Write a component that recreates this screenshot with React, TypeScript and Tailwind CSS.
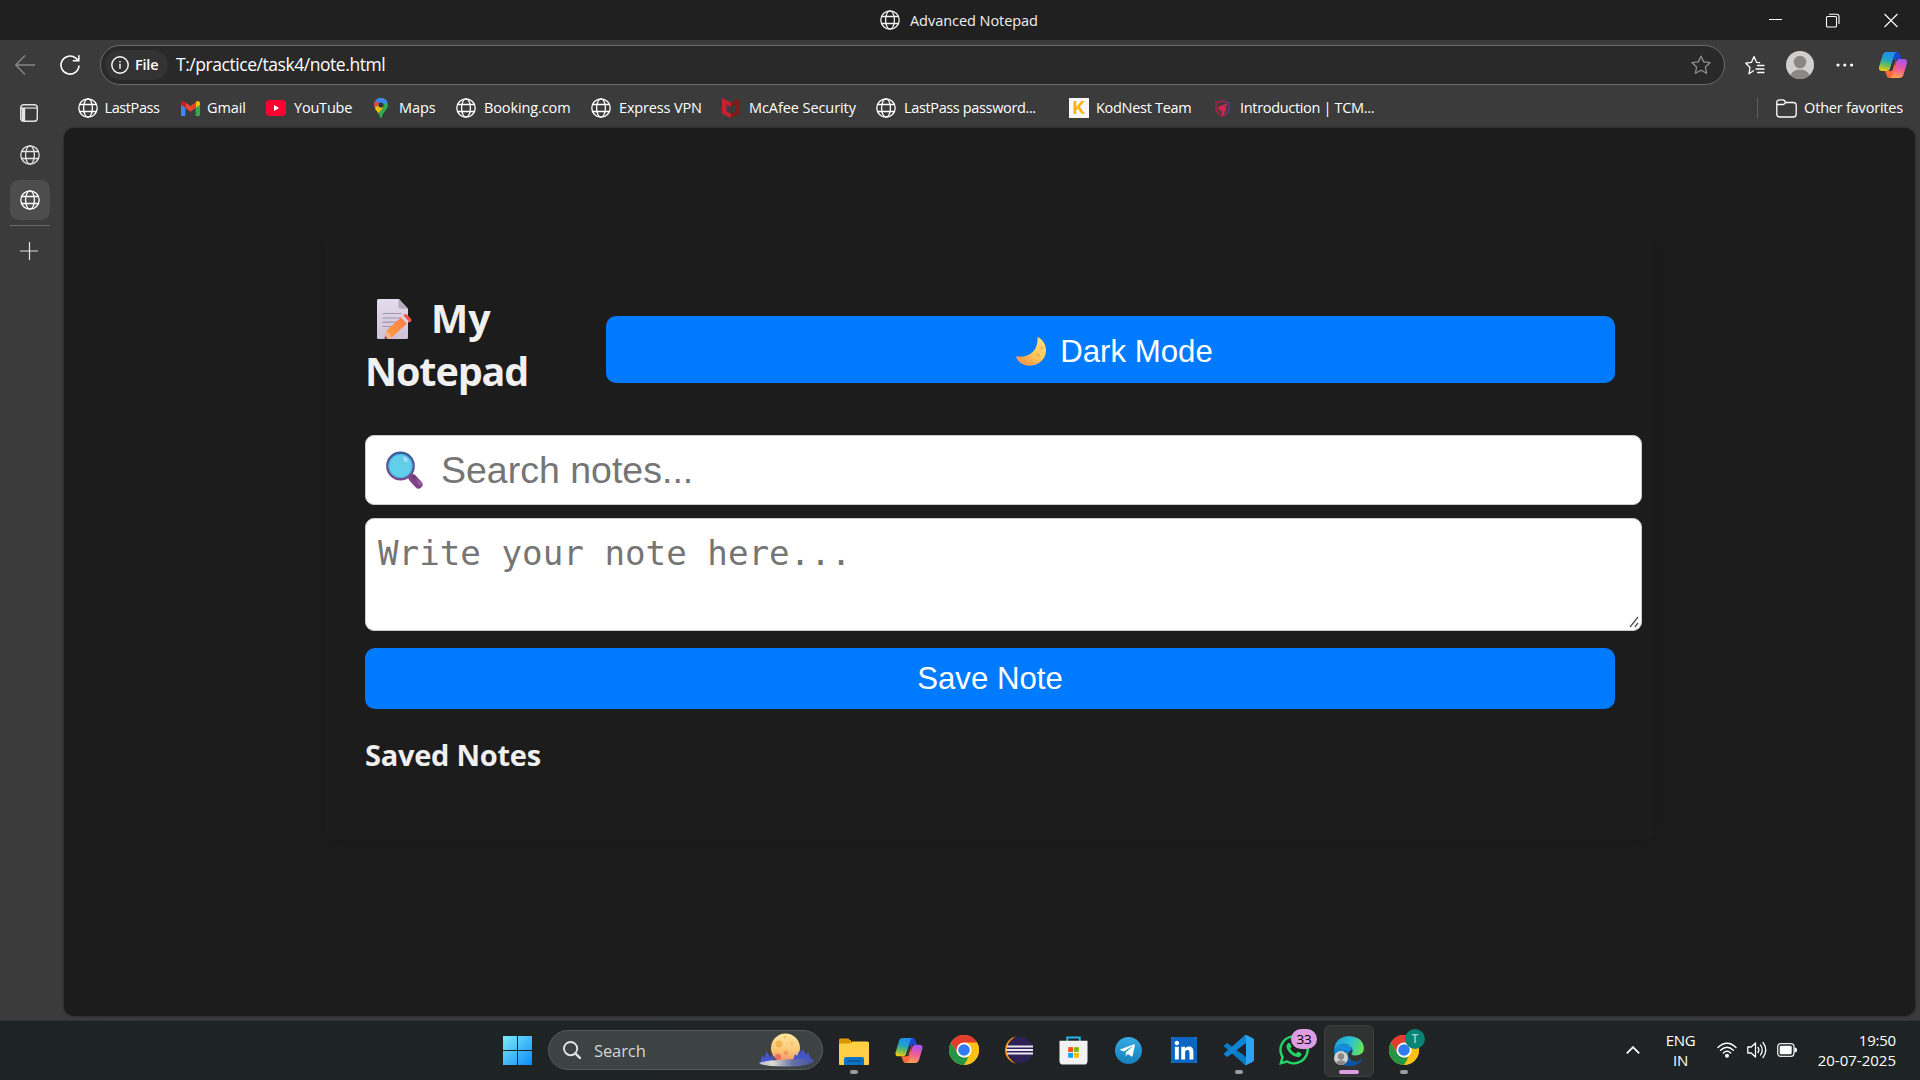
import type { ReactNode } from 'react';
import { FaWhatsapp, FaLinkedin, FaTelegramPlane } from 'react-icons/fa';

type P = { className?: string };

const Globe = ({ className = '' }: P) => (
  <svg className={`size-5 shrink-0 ${className}`} viewBox="0 0 20 20" fill="none" stroke="currentColor" strokeWidth="1.3">
    <circle cx="10" cy="10" r="9.2" />
    <ellipse cx="10" cy="10" rx="4.4" ry="9.2" />
    <path d="M1.6 6.5h16.8M1.6 13.5h16.8" />
  </svg>
);

const Gmail = () => (
  <svg className="w-[19px] h-[15px]" viewBox="0 0 19 15">
    <path d="M0 2v11.5C0 14.3.6 15 1.4 15h3V6z" fill="#4285f4" />
    <path d="M19 2v11.5c0 .8-.6 1.5-1.4 1.5h-3V6z" fill="#34a853" />
    <path d="M14.6 1.3V7L19 3.7V2.2C19 .2 16.8-.6 15.3.6z" fill="#fbbc04" />
    <path d="M4.4 7V1.3L9.5 5l5.1-3.7V7L9.5 10.8z" fill="#ea4335" />
    <path d="M0 2.2v1.5L4.4 7V1.3L3.7.7C2.2-.5 0 .2 0 2.2z" fill="#c5221f" />
  </svg>
);

const YouTube = () => (
  <svg className="w-5 h-4" viewBox="0 0 20 16">
    <rect width="20" height="16" rx="3.4" fill="#ff0033" />
    <path d="M8 5v6l5.2-3z" fill="#fff" />
  </svg>
);

const MapPin = () => (
  <svg className="w-[14px] h-5" viewBox="0 0 14 20">
    <clipPath id="pin"><path d="M7 0a7 7 0 0 0-7 7c0 4.200 4.400 6.400 5.900 11.700.4 1.600 1.800 1.600 2.200 0C9.600 13.400 14 11.200 14 7a7 7 0 0 0-7-7z" /></clipPath>
    <g clipPath="url(#pin)">
      <rect width="14" height="20" fill="#34a853" />
      <path d="M0 0h14v4L7 7 0 14z" fill="#4285f4" />
      <path d="M0 2l5 3.500L0 11z" fill="#ea4335" />
      <path d="M0 11.500L5 6l4 3.500L3 17z" fill="#fbbc04" />
      <path d="M4 0h10v4L9.500 6.500 5 4.500 2 1.500z" fill="#4285f4" />
    </g>
    <circle cx="7" cy="7" r="2.600" fill="#333" />
  </svg>
);

const McAfee = () => (
  <svg className="w-[18px] h-5" viewBox="0 0 18 20">
    <path d="M0 0l9 4.500v4.300L4.500 6.500v7.200L9 15.600V20L0 15.800z" fill="#c8202f" />
    <path d="M18 0L9 4.500v4.300l4.500-2.300v7.200L9 15.600V20l9-4.200z" fill="#7a1d1b" />
  </svg>
);

const KodNest = () => (
  <span className="flex size-5 items-center justify-center bg-[#f8f8f8] font-['Inter',sans-serif] text-[18px] leading-none font-bold text-[#fbb40c]">K</span>
);

const Shield = () => (
  <svg className="w-[15px] h-[17px]" viewBox="0 0 15 17" fill="none">
    <defs><linearGradient id="sh" x1="0" x2="1"><stop offset="0" stopColor="#c9183f" /><stop offset=".5" stopColor="#c21f55" /><stop offset="1" stopColor="#5b3aa0" /></linearGradient></defs>
    <path d="M1 2.500Q5 2.200 7.500.8 10 2.200 14 2.500v6q0 5-6.500 7.800Q1 13.500 1 8.500z" stroke="url(#sh)" strokeWidth="1.200" />
    <path d="M13 3L5 6 1.500 8.500 5 9l-2 3 3.500-2 .5 6 2-1 1-4 2-2-1.500-2z" fill="#d0264f" />
  </svg>
);

const Copilot = ({ className = '', id }: P & { id: string }) => (
  <svg className={className} viewBox="0 0 28 26">
    <defs>
      <linearGradient id={`${id}a`} x1=".5" y1="0" x2=".3" y2="1"><stop offset="0" stopColor="#1c8ff0" /><stop offset=".4" stopColor="#22a2c4" /><stop offset=".7" stopColor="#6dbd5a" /><stop offset="1" stopColor="#f4cb10" /></linearGradient>
      <linearGradient id={`${id}b`} x1=".6" y1="0" x2=".4" y2="1"><stop offset="0" stopColor="#a452f0" /><stop offset=".5" stopColor="#ee5a9c" /><stop offset="1" stopColor="#ffa14e" /></linearGradient>
    </defs>
    <path d="M13 0h5q2 0 2.700 2.300L22.500 7H18q-2 0-3 3l-3 9z" fill="#1747d1" />
    <path d="M15 26h-4.500q-2 0-2.800-2.300L6 19h4q2 0 3-3l4-10z" fill="#ff6a3c" />
    <path d="M7.500 0H18q-2 .3-3 3.500L11 17q-.8 2-3 2H3q-4 0-2.800-4.500L3.600 3Q4.600 0 7.500 0z" fill={`url(#${id}a)`} />
    <path d="M20.500 26H11q2-.3 3-3.500L17.500 9q.8-2 3-2H25q4 0 2.800 4.500L24.400 23q-1 3-3.900 3z" fill={`url(#${id}b)`} />
    <path d="M13.800 8.500l3.200-1.300-3.600 11.300-3 .8z" fill="#33343a" />
  </svg>
);

const Star = ({ lines = false, className = '' }: P & { lines?: boolean }) => (
  <svg className={`size-5 ${className}`} viewBox="0 0 20 20" fill="none" stroke="currentColor" strokeWidth="1.300" strokeLinejoin="round" strokeLinecap="round">
    {lines ? (
      <path d="M8.500 15.800L4 18.800l1-6.300L.8 8.200l5.700-.9L9 1.500l2.600 5.800 3 .4M12.500 10.500H19M11 14h8M12.500 17.500H19" />
    ) : (
      <path d="M10 1.200l2.700 5.700 6.300.8-4.600 4.300 1.200 6.300L10 15.200l-5.600 3.100L5.600 12 1 7.700l6.300-.8z" />
    )}
  </svg>
);

const Avatar = ({ className = '' }: P) => (
  <svg className={className} viewBox="0 0 28 28">
    <clipPath id="av"><circle cx="14" cy="14" r="14" /></clipPath>
    <g clipPath="url(#av)">
      <rect width="28" height="28" fill="#d2d0ce" />
      <circle cx="14" cy="11" r="6.300" fill="#8a8785" />
      <ellipse cx="14" cy="26" rx="10" ry="7.500" fill="#8a8785" />
    </g>
  </svg>
);

const bookmarks: { w: string; iw: string; icon: ReactNode; label: string; track: string }[] = [
  { w: 'w-[103px]', iw: 'w-[26.500px]', icon: <Globe />, label: 'LastPass', track: 'tracking-[-0.4px]' },
  { w: 'w-[85px]', iw: 'w-[26px]', icon: <Gmail />, label: 'Gmail', track: 'tracking-[-0.1px]' },
  { w: 'w-[108px]', iw: 'w-[28px]', icon: <YouTube />, label: 'YouTube', track: 'tracking-[-0.2px]' },
  { w: 'w-[82px]', iw: 'w-[25px]', icon: <MapPin />, label: 'Maps', track: 'tracking-[-0.1px]' },
  { w: 'w-[135px]', iw: 'w-[28px]', icon: <Globe />, label: 'Booking.com', track: 'tracking-[-0.12px]' },
  { w: 'w-[131px]', iw: 'w-[28px]', icon: <Globe />, label: 'Express VPN', track: 'tracking-[-0.16px]' },
  { w: 'w-[154px]', iw: 'w-[27px]', icon: <McAfee />, label: 'McAfee Security', track: 'tracking-[-0.08px]' },
  { w: 'w-[193px]', iw: 'w-[28px]', icon: <Globe />, label: 'LastPass password...', track: 'tracking-[-0.36px]' },
  { w: 'w-[146px]', iw: 'w-[27px]', icon: <KodNest />, label: 'KodNest Team', track: 'tracking-[-0.3px]' },
  { w: 'w-[170px]', iw: 'w-[25px]', icon: <Shield />, label: 'Introduction | TCM...', track: 'tracking-[-0.32px]' },
];

const TitleBar = () => (
  <header className="flex h-10 shrink-0 items-center bg-[#202020] pl-[880px] text-[#f0f0f0]">
    <Globe />
    <span className="mt-px ml-[10px] w-[858px] text-[14.5px] tracking-[-0.05px]">Advanced Notepad</span>
    <svg className="h-[15px] w-[130px]" viewBox="0 0 130 15" fill="none" stroke="#fff" strokeWidth="1.100">
      <path d="M1 6.500h13M116.500 1l13 13M129.500 1l-13 13" />
      <rect x="58.500" y="3.500" width="10" height="10.500" rx="1" />
      <path d="M61 1.200h7.500q2.500 0 2.500 2.500V11" />
    </svg>
  </header>
);

const Toolbar = () => (
  <div className="flex h-[50px] shrink-0 items-center pl-[15px] text-white">
    <svg className="h-[22px] w-5 text-[#858585]" viewBox="0 0 20 22" fill="none" stroke="currentColor" strokeWidth="1.400"><path d="M20 11H1M10 1.500L.8 11l9.200 9.500" /></svg>
    <svg className="ml-[25px] size-5" viewBox="0 0 20 20" fill="none" stroke="currentColor" strokeWidth="1.600"><path d="M19 10.500a9 9 0 1 1-3.200-7.300L18.300 5.500M18.800.3v5.500h-6" /></svg>
    <div className="ml-5 flex h-10 w-[1625px] items-center rounded-full border border-[#6b6b6b] bg-[#292929] pl-1">
      <div className="flex h-[30px] w-[63px] items-center rounded-full bg-[#333] pl-[6px]">
        <svg className="size-[18px]" viewBox="0 0 18 18" fill="none" stroke="currentColor" strokeWidth="1.400"><circle cx="9" cy="9" r="8.200" /><path d="M9 7.800v5M9 5v1.500" /></svg>
        <span className="ml-[6px] text-[14.5px] font-semibold tracking-[-0.2px]">File</span>
      </div>
      <span className="mb-px ml-2 text-[17.5px] tracking-[-0.45px]">T:/practice/task4/note.html</span>
      <Star className="mr-[13px] ml-auto text-[#8f8f8f]" />
    </div>
    <Star lines className="ml-5" />
    <Avatar className="ml-[21px] size-7" />
    <svg className="ml-[22px] h-4 w-[18px]" viewBox="0 0 18 4" fill="currentColor"><circle cx="2" cy="2" r="1.600" /><circle cx="8.800" cy="2" r="1.600" /><circle cx="15.600" cy="2" r="1.600" /></svg>
    <Copilot id="ct" className="ml-[25px] h-[26px] w-[28px]" />
  </div>
);

const BookmarkBar = () => (
  <div className="flex h-[38px] shrink-0 items-center pb-[2px] pl-[78px] text-[14.5px] whitespace-nowrap text-white">
    {bookmarks.map((b) => (
      <div key={b.label} className={`flex shrink-0 items-center ${b.w}`}>
        <span className={`shrink-0 ${b.iw}`}>{b.icon}</span>
        <span className={`mb-px ${b.track}`}>{b.label}</span>
      </div>
    ))}
    <div className="ml-auto flex h-5 items-center border-l border-[#5c5c5c] pr-[17px] pl-[18px]">
      <svg className="mr-[7px] h-[19px] w-[21px]" viewBox="0 0 21 19" fill="none" stroke="currentColor" strokeWidth="1.300"><path d="M.8 5.500V15q0 3 3 3h13.400q3 0 3-3V6.500q0-3-3-3H10L8.300 1.500Q7.700.8 6.700.8H3.800q-3 0-3 3v1.700h6q1 0 1.600-.7L10 3.500" /></svg>
      <span className="mb-px tracking-[-0.2px]">Other favorites</span>
    </div>
  </div>
);

const SideTabs = () => (
  <aside className="flex w-16 shrink-0 flex-col pl-[10px] text-[#e4e4e4]">
    <div className="mt-[-24px] flex h-[18px] pl-[10px]">
      <svg className="size-[18px]" viewBox="0 0 18 18" fill="none" stroke="currentColor"><rect x=".7" y=".7" width="16.600" height="16.600" rx="3" strokeWidth="1.400" /><path d="M1 4h16" strokeWidth="1.200" /><path d="M3.400 4v13" strokeWidth="3.600" /></svg>
    </div>
    <div className="mt-[23px] flex w-10 justify-center"><Globe /></div>
    <div className="mt-[15px] flex size-10 items-center justify-center rounded-[9px] bg-[#4d4d4d] text-white"><Globe /></div>
    <div className="mt-[5px] h-px w-10 bg-[#6a6a6a]" />
    <svg className="mt-4 ml-[10px] size-[18px]" viewBox="0 0 18 18" stroke="currentColor" strokeWidth="1.200"><path d="M9.500 0v18M0 9h18" /></svg>
  </aside>
);

const MemoIcon = () => (
  <svg className="h-10 w-[36px]" viewBox="0 0 36 40">
    <defs>
      <linearGradient id="pg" x1="0" y1="0" x2="0" y2="1"><stop offset="0" stopColor="#e4dcec" /><stop offset="1" stopColor="#cfc2d8" /></linearGradient>
      <linearGradient id="pn" x1="1" y1="0" x2="0" y2="1"><stop offset="0" stopColor="#ff7a45" /><stop offset="1" stopColor="#ffa445" /></linearGradient>
    </defs>
    <path d="M1.500 0H22l9 9.800V38.500Q31 40 29.500 40h-28Q0 40 0 38.500v-37Q0 0 1.500 0z" fill="url(#pg)" />
    <path d="M21.500 0v8q0 1.800 1.800 1.800H31z" fill="#b6aac3" />
    <path d="M5.500 14.500h19M5.500 19h19M5.500 23.200h15M5.500 27.500h11" stroke="#a197ad" strokeWidth="1.200" />
    <path d="M9.500 31.500L24 18.200l6 6.300L15 38.600 7.500 40z" fill="url(#pn)" />
    <path d="M9.500 31.500l5.500 7L7.500 40z" fill="#f2b48c" />
    <path d="M7.500 40l.7-3 2.300 2.400z" fill="#7b3350" />
    <path d="M24 18.200l2.200-2 6 6.300-2.200 2z" fill="#d9d3ea" />
    <path d="M26.200 16.200l1-.7q1.500-1.200 3 .3l3.700 3.900q1.400 1.500 0 2.900l-1 .8z" fill="#f8554d" />
  </svg>
);

const CrescentIcon = () => (
  <svg className="h-[29px] w-[30px]" viewBox="0 0 30 29">
    <defs><linearGradient id="cr" x1=".9" y1="0" x2=".2" y2="1"><stop offset="0" stopColor="#ffe27a" /><stop offset=".55" stopColor="#fcc75c" /><stop offset="1" stopColor="#f98f45" /></linearGradient></defs>
    <path d="M22.500.3C31 6 32.500 16.500 26 23.500 18 31.500 4.500 30 .2 20.500q-.3-1.300 1-1.200C13 21.500 22 14 21.600 1q.1-1.200.9-.7z" fill="url(#cr)" />
    <g fill="#eeb04d"><circle cx="22" cy="18" r="1.800" /><circle cx="14" cy="24" r="1.500" /><circle cx="26" cy="11" r="1.200" /><circle cx="20" cy="25" r="1" /></g>
  </svg>
);

const MagnifierIcon = () => (
  <svg className="h-[38px] w-[37px]" viewBox="0 0 37 38">
    <defs>
      <linearGradient id="mr" x1="0" y1="0" x2="0" y2="1"><stop offset="0" stopColor="#3c5f9c" /><stop offset="1" stopColor="#7a4a8c" /></linearGradient>
      <linearGradient id="mh" x1="0" y1="0" x2="1" y2="1"><stop offset="0" stopColor="#6b3575" /><stop offset="1" stopColor="#a060a4" /></linearGradient>
    </defs>
    <path d="M22 23l4 4" stroke="#7d4a90" strokeWidth="3" />
    <path d="M26.500 27L32.500 33.500" stroke="#7f4587" strokeWidth="8" strokeLinecap="round" />
    <path d="M28 26L34 32.500" stroke="url(#mh)" strokeWidth="3" strokeLinecap="round" />
    <circle cx="14.500" cy="15" r="13.200" fill="#62cfea" stroke="url(#mr)" strokeWidth="2.400" />
    <circle cx="14.500" cy="15" r="11.600" fill="none" stroke="#3fb4e4" strokeWidth="1" />
    <ellipse cx="19.500" cy="8.500" rx="2" ry="2.800" fill="#a8dcf4" transform="rotate(-30 19.500 8.500)" />
  </svg>
);

const NotepadPage = () => (
  <main className="mr-[5px] h-[888px] flex-1 rounded-[10px] bg-[#1c1c1c] pt-[100px] pl-[261px] shadow-[0_0_3px_rgba(0,0,0,0.5)]">
    <section className="h-[612px] w-[1330px] rounded-[12px] bg-[#1c1c1c] px-10 pt-[63px] shadow-[0_4px_20px_rgba(0,0,0,0.1)]">
      <div className="flex h-[106px]">
        <h1 className="w-[241px] pt-px text-[39.5px] leading-[53px] font-bold text-[#f0f0f0]">
          <span className="flex pl-3"><span className="mt-[7px] w-[54px]"><MemoIcon /></span>My</span>
          <span className="block tracking-[-1.1px]">Notepad</span>
        </h1>
        <button className="mt-[25px] flex h-[67px] w-[1009px] items-center justify-center gap-[14px] rounded-[10px] bg-[#007bff] pt-[4px] pl-[8px] font-['Liberation_Sans',sans-serif] text-[31.2px] leading-none text-white">
          <CrescentIcon /><span className="mt-px">Dark Mode</span>
        </button>
      </div>
      <div className="mt-[38px] flex h-[70px] w-[1277px] items-center rounded-[9px] border border-[#ccc] bg-white pl-5 font-['Liberation_Sans',sans-serif] text-[37.5px] leading-none text-[#757575]">
        <span className="mr-[18px]"><MagnifierIcon /></span><span className="mt-[2px]">Search notes...</span>
      </div>
      <div className="mt-[13px] flex h-[113px] w-[1277px] justify-between rounded-[9px] border border-[#ccc] bg-white pt-3 pl-3 font-['DejaVu_Sans_Mono',monospace] text-[34.2px] leading-[44px] text-[#757575]">
        Write your note here...
        <svg className="mr-[2px] mb-[2px] h-3 w-[10px] self-end" viewBox="0 0 10 12" stroke="#555" strokeWidth="1.300"><path d="M1 11l8-10M6 11l3-4" /></svg>
      </div>
      <button className="mt-[17px] flex h-[61px] w-[1250px] items-center justify-center rounded-[10px] bg-[#007bff] font-['Liberation_Sans',sans-serif] text-[31.2px] leading-none text-white">Save Note</button>
      <h2 className="mt-[26px] text-[29px] leading-10 font-bold tracking-[-0.25px] text-[#f0f0f0]">Saved Notes</h2>
    </section>
  </main>
);

const MoonScene = () => (
  <svg className="h-[34px] w-[56px]" viewBox="0 0 56 34">
    <defs>
      <linearGradient id="mn" x1=".5" y1="0" x2=".4" y2="1"><stop offset="0" stopColor="#ffe6a0" /><stop offset=".6" stopColor="#fbc673" /><stop offset="1" stopColor="#f48a68" /></linearGradient>
      <linearGradient id="gd" x1="0" x2="1"><stop offset="0" stopColor="#b9bedc" /><stop offset=".25" stopColor="#dedad2" /><stop offset=".6" stopColor="#6671a8" /><stop offset="1" stopColor="#4350a6" /></linearGradient>
    </defs>
    <circle cx="26.500" cy="15" r="14.500" fill="url(#mn)" />
    <circle cx="20" cy="11" r="3.500" fill="#eeb55b" /><circle cx="33" cy="10" r="2" fill="#f3c674" /><circle cx="27" cy="20" r="2.200" fill="#f19a5c" /><circle cx="19" cy="24" r="3" fill="#e76d62" /><circle cx="26" cy="4" r="1.600" fill="#f3c674" />
    <path d="M1 30l2-8 2 3 3-7 3 7 2-4 3 8zM34 27l2-6 2 2 2-5 2 1 2-3 3 6 2-3 2 5 3 4v2z" fill="#4557c8" />
    <path d="M0 30Q8 27 22 27q22-2 34 0-5 6-24 6.500Q4 34 0 30z" fill="url(#gd)" />
  </svg>
);

const Explorer = () => (
  <svg className="h-[27px] w-[30px]" viewBox="0 0 30 27">
    <path d="M0 2Q0 .5 1.500.5h8l2.500 3H0z" fill="#e09b05" /><path d="M0 2h12v6H0z" fill="#d99603" />
    <path d="M0 7q0-1.500 1.500-1.500H11L13 3.500h15.500Q30 3.500 30 5v21q0 1-1 1H1q-1 0-1-1z" fill="#ffcf45" />
    <path d="M5 27v-6q0-2 2-2h16q2 0 2 2v6z" fill="#0c73c4" /><path d="M8.500 23h13" stroke="#064f8c" strokeWidth="1.300" />
  </svg>
);

const Chrome = () => (
  <svg className="size-[30px]" viewBox="0 0 30 30">
    <circle cx="15" cy="15" r="15" fill="#fbc116" />
    <path d="M2 7.500A15 15 0 0 1 28 7.500H15L8.500 18.750z" fill="#e33b2e" />
    <path d="M2 7.500l6.500 11.250L15 22.500h6.500L15 30A15 15 0 0 1 2 7.500z" fill="#269447" />
    <path d="M15 30l6.500-11.250L28 7.500A15 15 0 0 1 15 30z" fill="#fbc116" />
    <circle cx="15" cy="15" r="7.500" fill="#fff" /><circle cx="15" cy="15" r="5.800" fill="#2f7bf0" />
  </svg>
);

const Eclipse = () => (
  <svg className="mr-[2px] h-[28px] w-[30px]" viewBox="0 0 30 28">
    <path d="M13 .3a14 14 0 0 0 0 27.400Q4 22 4 14T13 .3z" fill="#f7941e" />
    <circle cx="17" cy="14" r="13" fill="#2c2255" />
    <path d="M4 10.500h26M3.500 14h26.500M4 17.500h26" stroke="#e9e6f2" strokeWidth="2" />
  </svg>
);

const Store = () => (
  <svg className="h-[29px] w-[29px]" viewBox="0 0 30 29">
    <path d="M8.500 5V1h13v4" fill="none" stroke="#27b4ea" strokeWidth="2" />
    <path d="M.5 4.500h29V25q0 4-4 4h-21q-4 0-4-4z" fill="#f2f2f2" />
    <path d="M9.500 11h5v5h-5z" fill="#f25022" /><path d="M15.500 11h5v5h-5z" fill="#7fba00" /><path d="M9.500 17h5v5h-5z" fill="#00a4ef" /><path d="M15.500 17h5v5h-5z" fill="#ffb900" />
  </svg>
);

const VSCode = () => (
  <svg className="size-[30px]" viewBox="0 0 30 30">
    <path d="M0 10.500l2.500-2q.8-.5 1.500 0L22 22v8q-1 0-2-1L.3 11.800q-.6-.6-.3-1.300z" fill="#0b7ac4" />
    <path d="M0 19.500l2.500 2q.8.500 1.500 0L22 8V0q-1 0-2 1L.3 18.200q-.6.600-.3 1.300z" fill="#1084d4" />
    <path d="M20.500 1Q21.500-.3 23 .3L28.500 3Q30 3.700 30 5v20q0 1.300-1.500 2L23 29.700q-1.500.6-2.500-.7 1.500.3 1.500-1.500v-25Q22 .7 20.500 1z" fill="#29a3f2" />
  </svg>
);

const Edge = () => (
  <svg className="size-[30px]" viewBox="0 0 30 30">
    <defs>
      <linearGradient id="e1" x1="0" y1=".3" x2="1" y2=".5"><stop offset="0" stopColor="#1a9ee0" /><stop offset=".55" stopColor="#2cc3d0" /><stop offset="1" stopColor="#6ce254" /></linearGradient>
      <linearGradient id="e2" x1="0" y1="0" x2="0" y2="1"><stop offset="0" stopColor="#1793df" /><stop offset="1" stopColor="#1065c0" /></linearGradient>
    </defs>
    <path d="M0 15Q1 8 9 8q8 0 9 6-4 1-4 5 1 6 8 7 3 0 6-2-5 6-13 6Q1 29 0 15z" fill="url(#e2)" />
    <path d="M12 14q-2 6 3 10 6 4 13-.5 1-.3.500.8Q24 30 16 30 7 29 8 20q.500-4 4-6z" fill="#0c51a0" />
    <path d="M0 14Q1 1 15 0q14 1 15 12 0 7-8 7.500-5 0-4.500-2 2.500-3-.500-6.500Q13 7 8 8q-6 1-8 6z" fill="url(#e1)" />
  </svg>
);

const TaskItem = ({ children, mark = '' }: { children: ReactNode; mark?: string }) => (
  <div className="relative flex h-[50px] w-[55px] shrink-0 items-center justify-center">
    {children}
    {mark && <span className={`absolute bottom-[1px] h-1 rounded-full ${mark}`} />}
  </div>
);

const Taskbar = () => (
  <footer className="flex h-[60px] shrink-0 items-start border-t border-[#2f3333] bg-linear-to-r from-[#1c2423] via-[#202325] to-[#1e2323] pt-[4px] pl-[503px]">
    <svg className="mt-[11px] size-[29px]" viewBox="0 0 29 29"><defs><linearGradient id="wn" x1="0" y1="0" x2="1" y2="1"><stop offset="0" stopColor="#7cecfd" /><stop offset="1" stopColor="#0d8bf5" /></linearGradient></defs><path d="M0 0h14v14H0zM15 0h14v14H15zM0 15h14v14H0zM15 15h14v14H15z" fill="url(#wn)" /></svg>
    <div className="mt-[5px] ml-4 flex h-10 w-[275px] items-center rounded-full border border-[#565b5b] bg-[#3d4243] pl-[14px]">
      <svg className="size-[18px]" viewBox="0 0 18 18" fill="none" stroke="#e0e2e2" strokeWidth="1.900"><circle cx="7.600" cy="7.600" r="6.600" /><path d="M12.300 12.300l5 5" strokeWidth="2.400" strokeLinecap="round" /></svg>
      <span className="mt-[2px] ml-[13px] w-[165px] text-[16.5px] tracking-[-0.1px] text-[#d2d5d5]">Search</span>
      <MoonScene />
    </div>
    <div className="ml-[3px] flex">
      <TaskItem mark="w-2 bg-[#9a9c9d]"><span className="mt-0.5"><Explorer /></span></TaskItem>
      <TaskItem><Copilot id="cb" className="h-[25px] w-[28px]" /></TaskItem>
      <TaskItem><Chrome /></TaskItem>
      <TaskItem><Eclipse /></TaskItem>
      <TaskItem><Store /></TaskItem>
      <TaskItem><span className="flex size-[27px] items-center justify-center rounded-full bg-linear-to-b from-[#33aae3] to-[#1580bd] pr-0.5"><FaTelegramPlane className="size-[17px] text-white" /></span></TaskItem>
      <TaskItem><span className="flex size-[26px] items-center justify-center overflow-hidden rounded-[2px] bg-white"><FaLinkedin className="size-[30px] shrink-0 text-[#0a66c2]" /></span></TaskItem>
      <TaskItem mark="w-2 bg-[#9a9c9d]"><VSCode /></TaskItem>
      <TaskItem>
        <FaWhatsapp className="size-[34px] text-[#25d366]" />
        <span className="absolute top-1 left-[25px] flex h-5 w-[26px] items-center justify-center rounded-full bg-[#dc9de3] text-[13.5px] tracking-[-0.3px] text-black">33</span>
      </TaskItem>
      <div className="mx-[2.5px] flex w-[50px] justify-center rounded-md border border-[#3e3f3f] bg-[#313333]">
        <TaskItem mark="w-5 bg-[#dc9de3] -translate-y-px"><Edge /><Avatar className="absolute top-[25px] left-[13px] size-[14px]" /></TaskItem>
      </div>
      <TaskItem mark="w-2 bg-[#9a9c9d]">
        <Chrome />
        <span className="absolute top-1 left-[29px] flex size-5 items-center justify-center rounded-full bg-[#068475] text-[12px] font-semibold text-[#a5cfca]">T</span>
      </TaskItem>
    </div>
    <div className="mt-[5px] ml-auto flex h-10 items-center pr-[24px] text-[15px] leading-5 text-white">
      <svg className="mr-[26px] h-2 w-[14px]" viewBox="0 0 14 8" fill="none" stroke="#fff" strokeWidth="1.800"><path d="M.8 7.300L7 1.200l6.200 6.100" /></svg>
      <div className="mr-[22px] flex w-[29px] flex-col items-center tracking-[-0.3px]"><div>ENG</div><div>IN</div></div>
      <svg className="mr-[10px] h-[16px] w-5" viewBox="0 0 20 16" fill="none" stroke="#fff" strokeWidth="1.400" strokeLinecap="round"><path d="M1 5.500q9-8.500 18 0M3.600 8.300q6.400-6 12.800 0M6.300 11q3.700-3.300 7.400 0" /><circle cx="10" cy="13.700" r="1.300" fill="#fff" /></svg>
      <svg className="mr-[10px] h-[18px] w-5" viewBox="0 0 20 18" fill="none" stroke="#fff" strokeWidth="1.300" strokeLinejoin="round" strokeLinecap="round"><path d="M.8 6h3.400L8.500 2v14l-4.300-4H.8zM11 6.500q1.800 2.500 0 5M13.500 4q3.500 5 0 10M16 1.500q5.500 7.500 0 15" /></svg>
      <svg className="mr-5 h-[14px] w-5" viewBox="0 0 20 14" fill="none"><rect x=".7" y=".7" width="16.300" height="12.600" rx="3" stroke="#e8e8e8" strokeWidth="1.300" /><rect x="2.700" y="2.700" width="12" height="8.600" rx="1.200" fill="#fff" /><path d="M17.500 4.500q2.500 0 2.500 2.500t-2.500 2.500z" fill="#fff" /></svg>
      <div className="-mt-px w-[79px] text-right"><div className="tracking-[-0.2px]">19:50</div><div>20-07-2025</div></div>
    </div>
  </footer>
);

export default function App() {
  return (
    <div className="flex h-[1080px] w-[1920px] flex-col overflow-hidden bg-[#3b3b3b] font-['Open_Sans',sans-serif]">
      <TitleBar />
      <Toolbar />
      <BookmarkBar />
      <div className="flex h-[892px] shrink-0">
        <SideTabs />
        <NotepadPage />
      </div>
      <Taskbar />
    </div>
  );
}
